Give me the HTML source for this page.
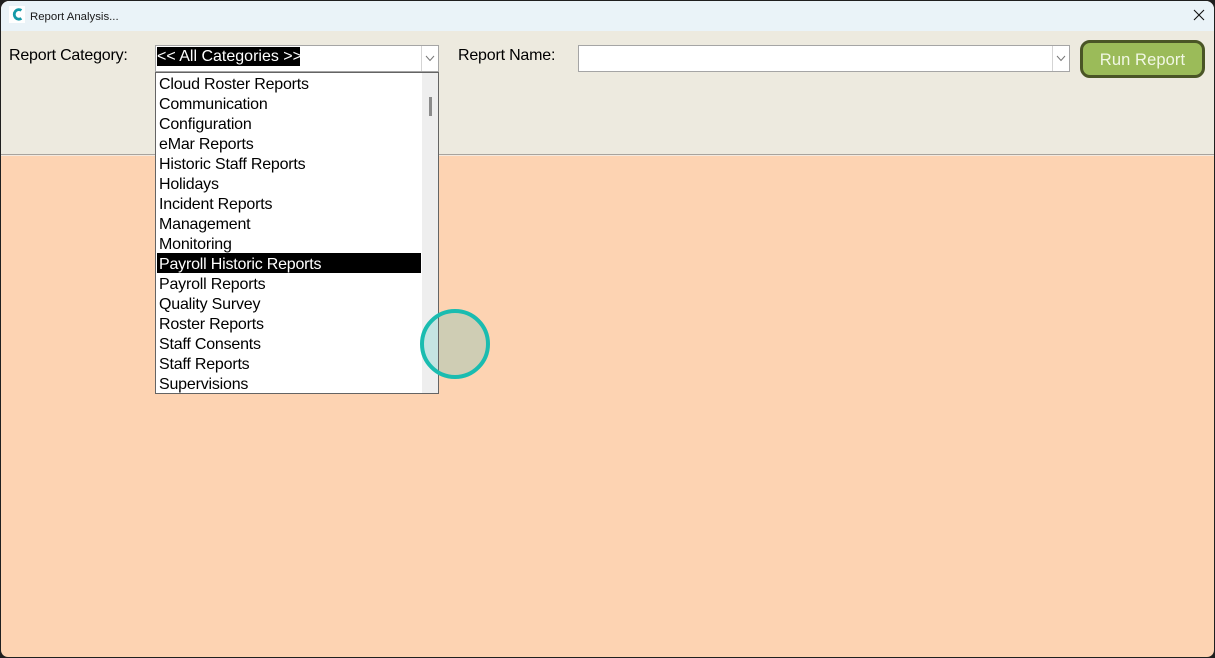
<!DOCTYPE html>
<html>
<head>
<meta charset="utf-8">
<title>Report Analysis...</title>
<style>
html,body{margin:0;padding:0;width:1215px;height:658px;overflow:hidden;background:#1f1f1f;}
*{box-sizing:border-box;}
body{font-family:"Liberation Sans",sans-serif;color:#000;position:relative;}
.a{position:absolute;}
#win{left:1px;top:1px;width:1213px;height:656px;border-radius:8px 8px 7px 7px;overflow:hidden;background:#fdd3b2;}
#title{left:0;top:0;width:1213px;height:30px;background:#eaf3f8;}
#toolbar{left:0;top:30px;width:1213px;height:124px;background:#edeadf;border-bottom:1px solid #a8a39d;}
#sep{left:0;top:154px;width:1213px;height:1px;background:#f3e9df;}
.t{position:absolute;white-space:nowrap;font-size:16px;line-height:20px;letter-spacing:-.2px;}
.combo{position:absolute;background:#fff;border:1px solid #a5a5a5;}
.btn{position:absolute;top:0;right:0;width:17px;height:100%;background:#fff;border-left:1px solid #d4d4d4;}
#list{left:155px;top:72px;width:284px;height:322px;background:#fff;border:1px solid #646464;}
#track{position:absolute;left:266px;top:0;width:16px;height:320px;background:#eeeeee;}
#thumb{position:absolute;left:273px;top:24px;width:3px;height:19px;background:#8b8b8b;}
#sel{position:absolute;left:1px;top:180px;width:264px;height:20px;background:#000;}
#run{left:1080px;top:40px;width:125px;height:38px;background:#9bbb59;border:3px solid #4a5526;border-radius:10px;color:#f1f7e4;font-size:16.5px;line-height:34px;text-align:center;letter-spacing:.1px;}
#circle{left:420px;top:309px;width:70px;height:70px;border-radius:50%;border:4px solid #1abcb0;background:linear-gradient(to right,#c5e4e2 0,#c5e4e2 14px,#646464 14px,#646464 15px,#cfcdb4 15px,#cfcdb4 100%);}
</style>
</head>
<body>
<div class="a" id="win"></div>
<div class="a" style="left:1px;top:1px;width:1213px;height:656px;border-radius:8px 8px 7px 7px;overflow:hidden;">
  <div class="a" id="title"></div>
  <div class="a" id="toolbar"></div>
  <div class="a" id="sep"></div>
</div>

<div class="a" style="left:9px;top:6px;width:16px;height:17px;background:#fff;"></div>
<svg class="a" style="left:9px;top:6px" width="16" height="17" viewBox="0 0 16 17">
  <path d="M12.4 4.4 A4.6 4.8 0 1 0 12.4 12.4" fill="none" stroke="#159aa8" stroke-width="2.8"/>
</svg>
<div class="t" style="left:30px;top:7px;font-size:11.4px;letter-spacing:0;color:#1a1a1a;">Report Analysis...</div>
<svg class="a" style="left:1193px;top:9px" width="12" height="12" viewBox="0 0 12 12">
  <path d="M1 1 L11 11 M11 1 L1 11" stroke="#111" stroke-width="1.1" fill="none"/>
</svg>

<div class="t" style="left:9px;top:46px;">Report Category:</div>
<div class="combo" style="left:155px;top:45px;width:284px;height:27px;">
  <div class="a" style="left:1px;top:1px;width:143px;height:19px;background:#000;"></div>
  <div class="t" style="left:1px;top:1px;color:#fff;letter-spacing:0;">&lt;&lt; All Categories &gt;&gt;</div>
  <div class="btn">
    <svg class="a" style="left:3px;top:9px" width="10" height="7" viewBox="0 0 10 7"><path d="M1 1 L5 5.5 L9 1" fill="none" stroke="#777" stroke-width="1"/></svg>
  </div>
</div>

<div class="t" style="left:458px;top:46px;">Report Name:</div>
<div class="combo" style="left:578px;top:45px;width:492px;height:27px;">
  <div class="btn">
    <svg class="a" style="left:3px;top:9px" width="10" height="7" viewBox="0 0 10 7"><path d="M1 1 L5 5.5 L9 1" fill="none" stroke="#777" stroke-width="1"/></svg>
  </div>
</div>

<div class="a" id="run">Run Report</div>

<div class="a" id="list">
  <div id="track"></div>
  <div id="thumb"></div>
  <div id="sel"></div>
  <div class="t" style="left:3px;top:2px;">Cloud Roster Reports</div>
  <div class="t" style="left:3px;top:22px;">Communication</div>
  <div class="t" style="left:3px;top:42px;">Configuration</div>
  <div class="t" style="left:3px;top:62px;">eMar Reports</div>
  <div class="t" style="left:3px;top:82px;">Historic Staff Reports</div>
  <div class="t" style="left:3px;top:102px;">Holidays</div>
  <div class="t" style="left:3px;top:122px;">Incident Reports</div>
  <div class="t" style="left:3px;top:142px;">Management</div>
  <div class="t" style="left:3px;top:162px;">Monitoring</div>
  <div class="t" style="left:3px;top:182px;color:#fff;">Payroll Historic Reports</div>
  <div class="t" style="left:3px;top:202px;">Payroll Reports</div>
  <div class="t" style="left:3px;top:222px;">Quality Survey</div>
  <div class="t" style="left:3px;top:242px;">Roster Reports</div>
  <div class="t" style="left:3px;top:262px;">Staff Consents</div>
  <div class="t" style="left:3px;top:282px;">Staff Reports</div>
  <div class="t" style="left:3px;top:302px;">Supervisions</div>
</div>

<div class="a" id="circle"></div>
</body>
</html>
